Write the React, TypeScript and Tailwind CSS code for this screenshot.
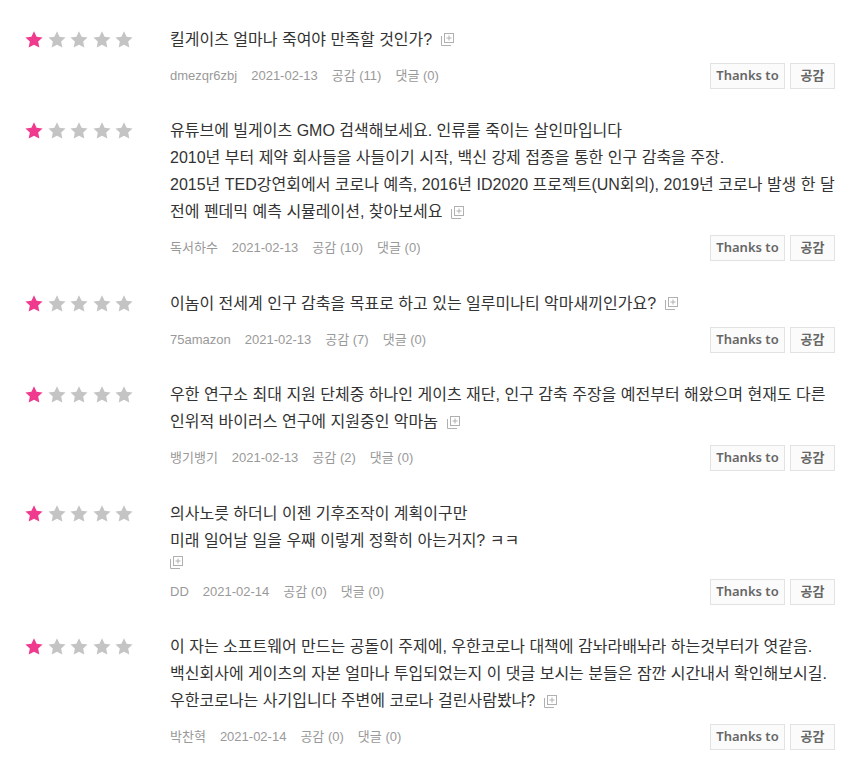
import React from "react";

type Item = {
  lines: string[];
  iconOwnLine?: boolean;
  author: string;
  date: string;
  likes: number;
  comments: number;
};

const items: Item[] = [
  { lines: ["킬게이츠 얼마나 죽여야 만족할 것인가?"], author: "dmezqr6zbj", date: "2021-02-13", likes: 11, comments: 0 },
  {
    lines: [
      "유튜브에 빌게이츠 GMO 검색해보세요. 인류를 죽이는 살인마입니다",
      "2010년 부터 제약 회사들을 사들이기 시작, 백신 강제 접종을 통한 인구 감축을 주장.",
      "2015년 TED강연회에서 코로나 예측, 2016년 ID2020 프로젝트(UN회의), 2019년 코로나 발생 한 달",
      "전에 펜데믹 예측 시뮬레이션, 찾아보세요",
    ],
    author: "독서하수",
    date: "2021-02-13",
    likes: 10,
    comments: 0,
  },
  { lines: ["이놈이 전세계 인구 감축을 목표로 하고 있는 일루미나티 악마새끼인가요?"], author: "75amazon", date: "2021-02-13", likes: 7, comments: 0 },
  {
    lines: [
      "우한 연구소 최대 지원 단체중 하나인 게이츠 재단, 인구 감축 주장을 예전부터 해왔으며 현재도 다른",
      "인위적 바이러스 연구에 지원중인 악마놈",
    ],
    author: "뱅기뱅기",
    date: "2021-02-13",
    likes: 2,
    comments: 0,
  },
  {
    lines: ["의사노릇 하더니 이젠 기후조작이 계획이구만", "미래 일어날 일을 우째 이렇게 정확히 아는거지? ㅋㅋ"],
    iconOwnLine: true,
    author: "DD",
    date: "2021-02-14",
    likes: 0,
    comments: 0,
  },
  {
    lines: [
      "이 자는 소프트웨어 만드는 공돌이 주제에, 우한코로나 대책에 감놔라배놔라 하는것부터가 엿같음.",
      "백신회사에 게이츠의 자본 얼마나 투입되었는지 이 댓글 보시는 분들은 잠깐 시간내서 확인해보시길.",
      "우한코로나는 사기입니다 주변에 코로나 걸린사람봤냐?",
    ],
    author: "박찬혁",
    date: "2021-02-14",
    likes: 0,
    comments: 0,
  },
];

const FONT = { fontFamily: '"Liberation Sans", "Noto Sans CJK KR", sans-serif' };
const BTN_FONT = { fontFamily: '"Noto Sans", "Noto Sans CJK KR", sans-serif' };

function Star({ on }: { on: boolean }) {
  return (
    <svg width="20" height="20" viewBox="0 0 24 24" className="block">
      <path
        d="M12 1.4l3.1 6.6 7.2.9-5.3 5 1.4 7.2L12 17.6 5.6 21.1 7 13.9l-5.3-5 7.2-.9z"
        fill={on ? "#ef3a8e" : "#c4c4c4"}
      />
    </svg>
  );
}

function MoreIcon({ className = "" }: { className?: string }) {
  return (
    <svg width="13" height="13" viewBox="0 0 13 13" className={className} fill="none" stroke="#b0b0b0" strokeWidth="1">
      <rect x="3.5" y="0.5" width="9" height="9" />
      <path d="M8 2.5v5M5.5 5h5" />
      <path d="M0.5 3v9.5H10" />
    </svg>
  );
}

function Row({ item }: { item: Item }) {
  return (
    <div className="flex">
      <div className="w-[170px] shrink-0 pl-[24px] pt-[4px]">
        <div className="flex gap-[2.5px]">
          <Star on />
          <Star on={false} />
          <Star on={false} />
          <Star on={false} />
          <Star on={false} />
        </div>
      </div>
      <div className="flex-1 pr-[16px]">
        <div className="text-[16px] leading-[27px] text-[#333] whitespace-nowrap">
          {item.lines.map((l, i) => (
            <div key={i}>
              {l}
              {!item.iconOwnLine && i === item.lines.length - 1 && (
                <MoreIcon className="inline-block align-middle ml-[9px] -mt-[1px]" />
              )}
            </div>
          ))}
          {item.iconOwnLine && (
            <div className="h-[15px] flex items-start">
              <MoreIcon className="block mt-[2px]" />
            </div>
          )}
        </div>
        <div className="mt-[10px] h-[26px] flex items-center justify-between">
          <div className="flex items-center gap-[14px] text-[13px] text-[#999]">
            <span>{item.author}</span>
            <span>{item.date}</span>
            <span>공감 ({item.likes})</span>
            <span>댓글 ({item.comments})</span>
          </div>
          <div className="flex gap-[5px]" style={BTN_FONT}>
            <button className="w-[75px] h-[26px] border border-[#e2e2e2] bg-[#fbfbfb] text-[13px] font-semibold text-[#666] flex items-center justify-center">
              Thanks to
            </button>
            <button className="w-[45px] h-[26px] border border-[#e2e2e2] bg-[#fbfbfb] text-[13px] font-semibold text-[#666] flex items-center justify-center">
              공감
            </button>
          </div>
        </div>
      </div>
    </div>
  );
}

export default function App() {
  return (
    <div className="w-[851px] h-[780px] bg-white overflow-hidden" style={FONT}>
      <div className="pt-[25.5px] flex flex-col gap-[28.5px]">
        {items.map((it, i) => (
          <Row key={i} item={it} />
        ))}
      </div>
    </div>
  );
}
